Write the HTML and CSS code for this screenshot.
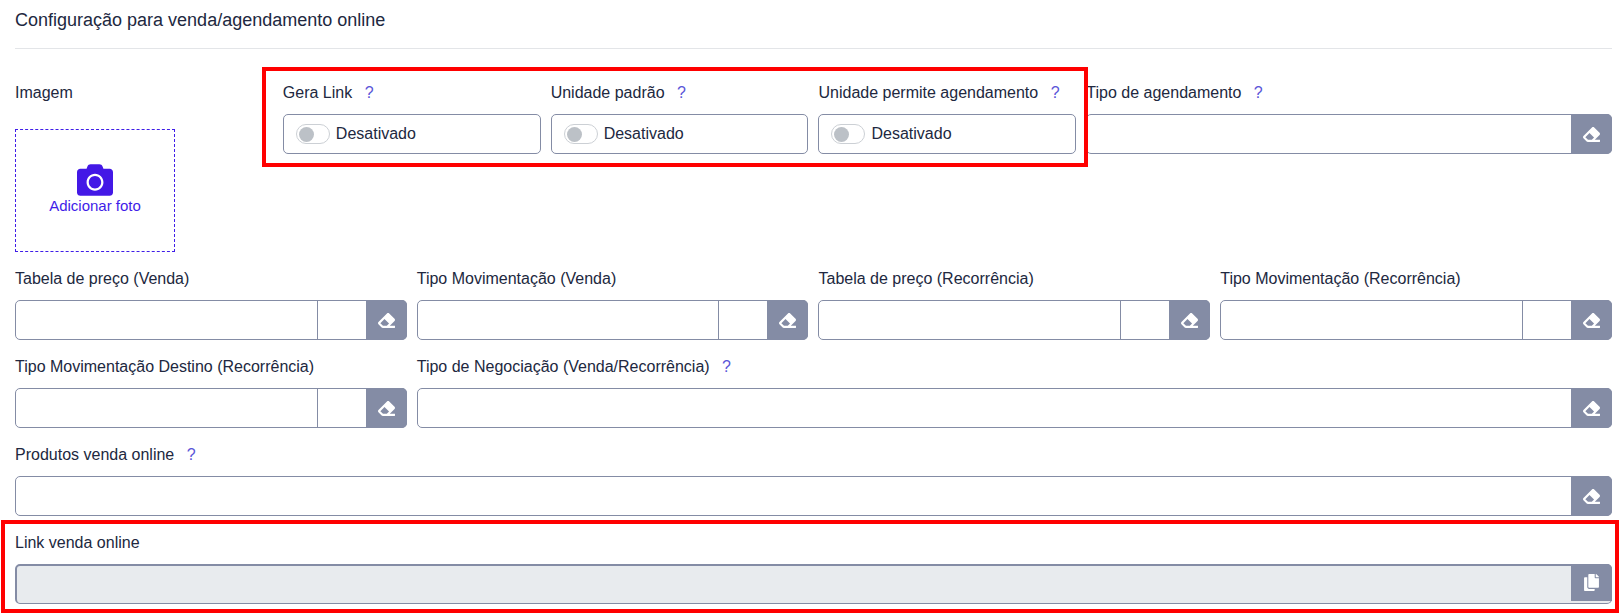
FILE: index.html
```html
<!DOCTYPE html>
<html lang="pt-BR">
<head>
    <meta charset="UTF-8">
    <title>Configuração para venda/agendamento online</title>
    <link rel="stylesheet" href="styles.css">
</head>
<body>
    <svg class="icon-defs" width="0" height="0">
        <symbol id="icon-eraser" viewBox="0 0 512 512">
            <path d="M497.941 273.941c18.745-18.745 18.745-49.137 0-67.882l-160-160c-18.745-18.745-49.136-18.746-67.883 0l-256 256c-18.745 18.745-18.745 49.137 0 67.882l96 96A48.004 48.004 0 0 0 144 480h356c6.627 0 12-5.373 12-12v-40c0-6.627-5.373-12-12-12H355.883l142.058-142.059zm-302.627-62.627l137.373 137.373L265.373 416H150.628l-80-80 124.686-124.686z"/>
        </symbol>
    </svg>

    <main class="page">
        <h2 class="page-title">Configuração para venda/agendamento online</h2>

        <form class="form-grid">
            <div class="col-2 photo-col">
                <label class="field-label">Imagem</label>
                <button type="button" class="photo-box">
                    <svg class="photo-icon" viewBox="0 0 512 512">
                        <path d="M512 144v288c0 26.5-21.5 48-48 48H48c-26.5 0-48-21.5-48-48V144c0-26.5 21.5-48 48-48h88l12.3-32.9c7-18.7 24.9-31.1 44.9-31.1h125.5c20 0 37.9 12.4 44.9 31.1L376 96h88c26.5 0 48 21.5 48 48zM376 288c0-66.2-53.8-120-120-120s-120 53.8-120 120 53.8 120 120 120 120-53.8 120-120zm-32 0c0 48.5-39.5 88-88 88s-88-39.5-88-88 39.5-88 88-88 88 39.5 88 88z"/>
                    </svg>
                    <span>Adicionar foto</span>
                </button>
            </div>

            <div class="col-2">
                <label class="field-label">Gera Link <span class="help">?</span></label>
                <div class="field toggle-field">
                    <span class="toggle"><span class="toggle-knob"></span></span>
                    <span>Desativado</span>
                </div>
            </div>
            <div class="col-2">
                <label class="field-label">Unidade padrão <span class="help">?</span></label>
                <div class="field toggle-field">
                    <span class="toggle"><span class="toggle-knob"></span></span>
                    <span>Desativado</span>
                </div>
            </div>
            <div class="col-2">
                <label class="field-label">Unidade permite agendamento <span class="help">?</span></label>
                <div class="field toggle-field">
                    <span class="toggle"><span class="toggle-knob"></span></span>
                    <span>Desativado</span>
                </div>
            </div>
            <div class="col-4">
                <label class="field-label">Tipo de agendamento <span class="help">?</span></label>
                <div class="field">
                    <input type="text">
                    <button type="button" class="field-btn"><svg class="btn-icon"><use href="#icon-eraser"/></svg></button>
                </div>
            </div>

            <div class="col-3">
                <label class="field-label">Tabela de preço (Venda)</label>
                <div class="field">
                    <input type="text">
                    <span class="field-spacer"></span>
                    <button type="button" class="field-btn"><svg class="btn-icon"><use href="#icon-eraser"/></svg></button>
                </div>
            </div>
            <div class="col-3">
                <label class="field-label">Tipo Movimentação (Venda)</label>
                <div class="field">
                    <input type="text">
                    <span class="field-spacer"></span>
                    <button type="button" class="field-btn"><svg class="btn-icon"><use href="#icon-eraser"/></svg></button>
                </div>
            </div>
            <div class="col-3">
                <label class="field-label">Tabela de preço (Recorrência)</label>
                <div class="field">
                    <input type="text">
                    <span class="field-spacer"></span>
                    <button type="button" class="field-btn"><svg class="btn-icon"><use href="#icon-eraser"/></svg></button>
                </div>
            </div>
            <div class="col-3">
                <label class="field-label">Tipo Movimentação (Recorrência)</label>
                <div class="field">
                    <input type="text">
                    <span class="field-spacer"></span>
                    <button type="button" class="field-btn"><svg class="btn-icon"><use href="#icon-eraser"/></svg></button>
                </div>
            </div>

            <div class="col-3">
                <label class="field-label">Tipo Movimentação Destino (Recorrência)</label>
                <div class="field">
                    <input type="text">
                    <span class="field-spacer"></span>
                    <button type="button" class="field-btn"><svg class="btn-icon"><use href="#icon-eraser"/></svg></button>
                </div>
            </div>
            <div class="col-9">
                <label class="field-label">Tipo de Negociação (Venda/Recorrência) <span class="help">?</span></label>
                <div class="field">
                    <input type="text">
                    <button type="button" class="field-btn"><svg class="btn-icon"><use href="#icon-eraser"/></svg></button>
                </div>
            </div>

            <div class="col-12">
                <label class="field-label">Produtos venda online <span class="help">?</span></label>
                <div class="field">
                    <input type="text">
                    <button type="button" class="field-btn"><svg class="btn-icon"><use href="#icon-eraser"/></svg></button>
                </div>
            </div>

            <div class="col-12">
                <label class="field-label">Link venda online</label>
                <div class="field field-disabled">
                    <input type="text" disabled>
                    <button type="button" class="field-btn">
                        <svg class="copy-icon" viewBox="0 0 448 512">
                            <path d="M320 448v40c0 13.255-10.745 24-24 24H24c-13.255 0-24-10.745-24-24V120c0-13.255 10.745-24 24-24h72v296c0 30.879 25.121 56 56 56h168zm0-344V0H152c-13.255 0-24 10.745-24 24v368c0 13.255 10.745 24 24 24h272c13.255 0 24-10.745 24-24V128H344c-13.2 0-24-10.8-24-24zm120.971-31.029L375.029 7.029A24 24 0 0 0 358.059 0H352v96h96v-6.059a24 24 0 0 0-7.029-16.97z"/>
                        </svg>
                    </button>
                </div>
            </div>
        </form>
    </main>

    <!-- red highlight boxes drawn over the form -->
    <div class="highlight highlight-toggles"></div>
    <div class="highlight highlight-link"></div>
</body>
</html>
```

FILE: styles.css
```css
* {
    box-sizing: border-box;
}

body {
    position: relative;
    margin: 0;
    height: 614px;
    overflow: hidden;
    background-color: #fff;
    color: #212840;
    font-family: "Liberation Sans", Arial, sans-serif;
    font-size: 16px;
}

.icon-defs {
    position: absolute;
}

.page {
    padding: 8px 11px 0 15px;
}

.page-title {
    margin: 0 0 32px;
    padding-bottom: 16px;
    border-bottom: 1px solid #e3e5e8;
    font-size: 18px;
    font-weight: 400;
    line-height: 24px;
}

.form-grid {
    display: grid;
    grid-template-columns: repeat(12, 1fr);
    column-gap: 10px;
    row-gap: 15px;
}

.col-2 { grid-column: span 2; }
.col-3 { grid-column: span 3; }
.col-4 { grid-column: span 4; }
.col-9 { grid-column: span 9; }
.col-12 { grid-column: span 12; }

.field-label {
    display: block;
    margin-bottom: 9px;
    line-height: 24px;
    white-space: nowrap;
}

.help {
    margin-left: 8px;
    color: #5a55d8;
}

.photo-col .field-label {
    margin-bottom: 24px;
}

.photo-box {
    display: flex;
    flex-direction: column;
    align-items: center;
    width: 160px;
    height: 123px;
    padding: 32px 0 0;
    border: 1px dashed #3f1de8;
    background: none;
    color: #3f1de8;
    font-family: inherit;
    font-size: 15px;
}

.photo-icon {
    width: 36px;
    height: 36px;
    margin-bottom: -1px;
    fill: #4318e6;
}

.field {
    display: flex;
    height: 40px;
    border: 1px solid #848ca5;
    border-radius: 5px;
}

.field input {
    flex: 1;
    min-width: 0;
    border: none;
    border-radius: 5px;
    background: none;
    outline: none;
}

.field-spacer {
    width: 49px;
    border-left: 1px solid #848ca5;
}

.field-btn {
    display: flex;
    align-items: center;
    justify-content: center;
    width: 41px;
    margin: -1px -1px -1px 0;
    padding: 0;
    border: none;
    border-radius: 0 5px 5px 0;
    background-color: #848ca5;
}

.btn-icon {
    width: 17px;
    height: 17px;
    fill: #fff;
}

.copy-icon {
    width: 15px;
    height: 17px;
    fill: #fff;
}

.toggle-field {
    align-items: center;
    gap: 6px;
    padding-left: 12px;
}

.toggle {
    display: flex;
    align-items: center;
    width: 34px;
    height: 20px;
    padding-left: 2px;
    border: 1px solid #ccd0d5;
    border-radius: 10px;
}

.toggle-knob {
    width: 15px;
    height: 15px;
    border-radius: 50%;
    background-color: #bcc1c7;
}

.field-disabled {
    border-width: 2px 1px 1px 2px;
    background-color: #e8ebee;
}

.field-disabled .field-btn {
    height: 37px;
    margin: -2px -1px 0 0;
    border-radius: 0 5px 0 0;
}

.highlight {
    position: absolute;
    border: 4px solid #f00;
}

.highlight-toggles {
    top: 67px;
    left: 262px;
    width: 826px;
    height: 100px;
}

.highlight-link {
    top: 520px;
    left: 1px;
    width: 1618px;
    height: 93px;
}
```
